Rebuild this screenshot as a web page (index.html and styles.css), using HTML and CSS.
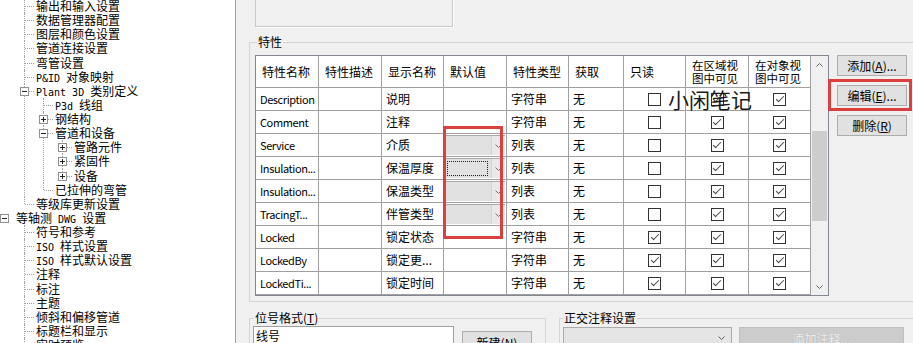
FILE: index.html
```html
<!DOCTYPE html>
<html lang="zh-CN">
<head>
    <meta charset="UTF-8">
    <title>项目设置 - 特性</title>
    <link rel="stylesheet" href="styles.css">
</head>
<body>
    <!-- 左侧设置树 -->
    <div class="tree">
        <ul class="root">
            <li>
                <ul>
                    <li><div class="row">输出和输入设置</div></li>
                    <li><div class="row">数据管理器配置</div></li>
                    <li><div class="row">图层和颜色设置</div></li>
                    <li><div class="row">管道连接设置</div></li>
                    <li><div class="row">弯管设置</div></li>
                    <li><div class="row"><span class="a">P&amp;ID </span>对象映射</div></li>
                    <li>
                        <div class="row"><span class="exp"></span><span class="a">Plant 3D </span>类别定义</div>
                        <ul>
                            <li><div class="row"><span class="a">P3d </span>线组</div></li>
                            <li><div class="row"><span class="exp plus"></span>钢结构</div></li>
                            <li>
                                <div class="row"><span class="exp"></span>管道和设备</div>
                                <ul>
                                    <li><div class="row"><span class="exp plus"></span>管路元件</div></li>
                                    <li><div class="row"><span class="exp plus"></span>紧固件</div></li>
                                    <li><div class="row"><span class="exp plus"></span>设备</div></li>
                                </ul>
                            </li>
                            <li><div class="row">已拉伸的弯管</div></li>
                        </ul>
                    </li>
                    <li><div class="row">等级库更新设置</div></li>
                </ul>
            </li>
            <li>
                <div class="row"><span class="exp"></span>等轴测<span class="a"> DWG </span>设置</div>
                <ul>
                    <li><div class="row">符号和参考</div></li>
                    <li><div class="row"><span class="a">ISO </span>样式设置</div></li>
                    <li><div class="row"><span class="a">ISO </span>样式默认设置</div></li>
                    <li><div class="row">注释</div></li>
                    <li><div class="row">标注</div></li>
                    <li><div class="row">主题</div></li>
                    <li><div class="row">倾斜和偏移管道</div></li>
                    <li><div class="row">标题栏和显示</div></li>
                    <li class="more"><div class="row">实时预览</div></li>
                </ul>
            </li>
        </ul>
    </div>

    <!-- 右侧内容 -->
    <div class="main">
        <div class="topbox"></div>

        <fieldset class="group props">
            <legend>特性</legend>
            <div class="props-body">
                <div class="grid-wrap">
                    <div class="grid">
                        <div class="h">特性名称</div><div class="h">特性描述</div><div class="h">显示名称</div><div class="h">默认值</div><div class="h">特性类型</div><div class="h">获取</div><div class="h">只读</div><div class="h two">在区域视<br>图中可见</div><div class="h two">在对象视<br>图中可见</div>

                        <div class="c en">Description</div><div class="c"></div><div class="c">说明</div><div class="c"></div><div class="c">字符串</div><div class="c">无</div><div class="c ck"><span class="box"></span></div><div class="c ck"><span class="box on"></span></div><div class="c ck"><span class="box on"></span></div>

                        <div class="c en">Comment</div><div class="c"></div><div class="c">注释</div><div class="c"></div><div class="c">字符串</div><div class="c">无</div><div class="c ck"><span class="box"></span></div><div class="c ck"><span class="box on"></span></div><div class="c ck"><span class="box on"></span></div>

                        <div class="c en">Service</div><div class="c"></div><div class="c">介质</div>
                        <div class="c cb"><div class="combo"><span class="combo-text"></span><span class="combo-btn"><svg width="7" height="4" viewBox="0 0 7 4"><polyline points="0.5,0.5 3.5,3.5 6.5,0.5" fill="none" stroke="#707070"/></svg></span></div></div>
                        <div class="c">列表</div><div class="c">无</div><div class="c ck"><span class="box"></span></div><div class="c ck"><span class="box on"></span></div><div class="c ck"><span class="box on"></span></div>

                        <div class="c en">Insulation...</div><div class="c"></div><div class="c">保温厚度</div>
                        <div class="c cb"><div class="combo"><span class="combo-text"><span class="focus"></span></span><span class="combo-btn"><svg width="7" height="4" viewBox="0 0 7 4"><polyline points="0.5,0.5 3.5,3.5 6.5,0.5" fill="none" stroke="#707070"/></svg></span></div></div>
                        <div class="c">列表</div><div class="c">无</div><div class="c ck"><span class="box"></span></div><div class="c ck"><span class="box on"></span></div><div class="c ck"><span class="box on"></span></div>

                        <div class="c en">Insulation...</div><div class="c"></div><div class="c">保温类型</div>
                        <div class="c cb"><div class="combo"><span class="combo-text"></span><span class="combo-btn"><svg width="7" height="4" viewBox="0 0 7 4"><polyline points="0.5,0.5 3.5,3.5 6.5,0.5" fill="none" stroke="#707070"/></svg></span></div></div>
                        <div class="c">列表</div><div class="c">无</div><div class="c ck"><span class="box"></span></div><div class="c ck"><span class="box on"></span></div><div class="c ck"><span class="box on"></span></div>

                        <div class="c en">TracingT...</div><div class="c"></div><div class="c">伴管类型</div>
                        <div class="c cb"><div class="combo"><span class="combo-text"></span><span class="combo-btn"><svg width="7" height="4" viewBox="0 0 7 4"><polyline points="0.5,0.5 3.5,3.5 6.5,0.5" fill="none" stroke="#707070"/></svg></span></div></div>
                        <div class="c">列表</div><div class="c">无</div><div class="c ck"><span class="box"></span></div><div class="c ck"><span class="box on"></span></div><div class="c ck"><span class="box on"></span></div>

                        <div class="c en">Locked</div><div class="c"></div><div class="c">锁定状态</div><div class="c"></div><div class="c">字符串</div><div class="c">无</div><div class="c ck"><span class="box on"></span></div><div class="c ck"><span class="box on"></span></div><div class="c ck"><span class="box on"></span></div>

                        <div class="c en">LockedBy</div><div class="c"></div><div class="c">锁定更...</div><div class="c"></div><div class="c">字符串</div><div class="c">无</div><div class="c ck"><span class="box on"></span></div><div class="c ck"><span class="box on"></span></div><div class="c ck"><span class="box on"></span></div>

                        <div class="c en">LockedTi...</div><div class="c"></div><div class="c">锁定时间</div><div class="c"></div><div class="c">字符串</div><div class="c">无</div><div class="c ck"><span class="box on"></span></div><div class="c ck"><span class="box on"></span></div><div class="c ck"><span class="box on"></span></div>
                    </div>

                    <!-- 垂直滚动条 -->
                    <div class="vscroll">
                        <div class="sb-arrow"><svg width="7" height="4" viewBox="0 0 7 4"><polyline points="0.5,3.5 3.5,0.5 6.5,3.5" fill="none" stroke="#606060"/></svg></div>
                        <div class="sb-thumb"></div>
                        <div class="sb-arrow down"><svg width="7" height="4" viewBox="0 0 7 4"><polyline points="0.5,0.5 3.5,3.5 6.5,0.5" fill="none" stroke="#606060"/></svg></div>
                    </div>
                </div>

                <div class="btns">
                    <button class="btn">添加(<u>A</u>)...</button>
                    <button class="btn">编辑(<u>E</u>)...</button>
                    <button class="btn">删除(<u>R</u>)</button>
                </div>
            </div>
        </fieldset>

        <div class="bottom">
            <fieldset class="group tag">
                <legend>位号格式(<u>T</u>)</legend>
                <div class="tag-row">
                    <div class="textbox">线号</div>
                    <button class="btn btn-new">新建(<u>N</u>)</button>
                </div>
            </fieldset>
            <fieldset class="group ortho">
                <legend>正交注释设置</legend>
                <div class="tag-row">
                    <div class="dd"><svg width="7" height="4" viewBox="0 0 7 4"><polyline points="0.5,0.5 3.5,3.5 6.5,0.5" fill="none" stroke="#606060"/></svg></div>
                    <button class="btn btn-off" disabled>添加注释...</button>
                </div>
            </fieldset>
        </div>
    </div>

    <!-- 标注框和水印 -->
    <div class="mark mark-default"></div>
    <div class="mark mark-edit"></div>
    <div class="wm">小闲笔记</div>
</body>
</html>
```

FILE: styles.css
```css
/* General */
* {
    box-sizing: border-box;
}

body {
    margin: 0;
    height: 343px;
    overflow: hidden;
    position: relative;
    display: flex;
    background: #f0f0f0;
    color: #000;
    font-family: "Noto Sans CJK SC", "Noto Sans", sans-serif;
    font-size: 12px;
}

/* Settings tree */
.tree {
    width: 236px;
    flex: none;
    background: #fff;
    border-right: 1px solid #a0a0a0;
    overflow: hidden;
}

.tree ul {
    list-style: none;
    margin: 0;
    padding: 0;
}

.tree .root {
    margin-top: -1px;
}

.tree .root > li > ul {
    padding-left: 20px;
}

.tree ul ul ul {
    padding-left: 19px;
}

.tree li {
    position: relative;
}

.tree .row {
    height: 14.13px;
    line-height: 14px;
    padding-left: 16px;
    white-space: nowrap;
}

/* dotted tree lines */
.tree ul ul > li::before {
    content: "";
    position: absolute;
    left: 4px;
    top: 0;
    bottom: 0;
    border-left: 1px dotted #a0a0a0;
}

.tree ul ul > li:last-child::before {
    bottom: auto;
    height: 7px;
}

.tree ul ul > li.more::before {
    bottom: 0;
    height: auto;
}

.tree ul ul > li > .row::before {
    content: "";
    position: absolute;
    left: 5px;
    top: 7px;
    width: 9px;
    border-top: 1px dotted #a0a0a0;
}

.exp {
    position: absolute;
    left: 0;
    top: 3px;
    width: 9px;
    height: 9px;
    border: 1px solid #919191;
    background: #fff;
    z-index: 1;
}

.exp::before {
    content: "";
    position: absolute;
    left: 1px;
    top: 3px;
    width: 5px;
    border-top: 1px solid #222;
}

.exp.plus::after {
    content: "";
    position: absolute;
    left: 3px;
    top: 1px;
    height: 5px;
    border-left: 1px solid #222;
}

.a {
    font-family: "DejaVu Sans Mono", monospace;
    font-size: 10px;
}

/* Right panel */
.main {
    flex: 1;
    padding-left: 13px;
    min-width: 0;
}

.topbox {
    margin: -1px 0 0 6px;
    width: 198px;
    height: 28px;
    border: 1px solid #c8c8c8;
    box-shadow: 1px 1px 0 #fff;
}

.group {
    margin: 0;
    border: 1px solid #d5d5d5;
    min-width: 0;
}

.group legend {
    padding: 0 1px;
    font-size: 12px;
    line-height: 14px;
}

.props {
    margin: 8px -10px 0 0;
    padding: 6px 0 5px 5px;
}

.props legend {
    margin-left: 2px;
}

.props-body {
    display: flex;
    align-items: flex-start;
}

/* Property grid */
.grid-wrap {
    display: flex;
    border: 1px solid #828790;
}

.grid {
    display: grid;
    grid-template-columns: 63px 63px 62px 63px 62px 55px 62px 63px 62px;
    grid-template-rows: 32px;
    grid-auto-rows: 23px;
    background: #fff;
}

.grid > div {
    border-right: 1px solid #a0a0a0;
    border-bottom: 1px solid #a0a0a0;
    overflow: hidden;
    white-space: nowrap;
}

.h {
    display: flex;
    align-items: center;
    padding-left: 6px;
    line-height: 13px;
}

.h.two {
    font-size: 11.5px;
}

.c {
    padding-left: 4px;
    line-height: 22px;
}

.c.en {
    font-size: 11px;
    letter-spacing: -0.4px;
}

.ck {
    display: flex;
    align-items: center;
    justify-content: center;
    padding-left: 0;
}

.box {
    position: relative;
    width: 13px;
    height: 13px;
    border: 1px solid #333;
    background: #fff;
}

.box.on::after {
    content: "";
    position: absolute;
    left: 3.5px;
    top: 0.5px;
    width: 3px;
    height: 7px;
    border-right: 1px solid #444;
    border-bottom: 1px solid #444;
    transform: rotate(45deg);
}

.c.cb {
    padding: 1px 1px 1px 1px;
}

.combo {
    display: flex;
    height: 100%;
    background: #e1e1e1;
    border-top: 1px solid #a8a8a8;
}

.combo-text {
    flex: 1;
    padding: 2px 3px 2px 2px;
}

.focus {
    display: block;
    height: 100%;
    border: 1px dotted #222;
}

.combo-btn {
    width: 14px;
    display: flex;
    align-items: center;
    justify-content: center;
    background: #e9e9e9;
    border-left: 1px solid #d4d4d4;
}

/* Scrollbar */
.vscroll {
    width: 17px;
    display: flex;
    flex-direction: column;
    background: #f0f0f0;
}

.sb-arrow {
    height: 17px;
    display: flex;
    align-items: center;
    justify-content: center;
}

.sb-arrow.down {
    margin-top: auto;
}

.sb-thumb {
    height: 90px;
    margin: 58px 1px 0;
    background: #cdcdcd;
}

/* Buttons */
.btns {
    display: flex;
    flex-direction: column;
    gap: 9px;
    margin-left: 8px;
}

.btn {
    width: 70px;
    height: 21px;
    padding: 0;
    background: #e1e1e1;
    border: 1px solid #adadad;
    font-family: inherit;
    font-size: 12px;
    line-height: 19px;
    color: #000;
}

/* Bottom groups */
.bottom {
    display: flex;
    margin: 9px -10px 0 0;
}

.tag {
    width: 297px;
    flex: none;
    padding: 1px 0 0 3px;
}

.tag legend {
    margin-left: 1px;
}

.tag-row {
    display: flex;
    align-items: flex-start;
}

.textbox {
    width: 201px;
    height: 22px;
    padding: 0 2px;
    line-height: 18px;
    background: #fff;
    border: 1px solid #a0a0a0;
}

.btn-new {
    margin: 5px 0 0 8px;
    height: 22px;
}

.ortho {
    flex: 1;
    margin-left: 13px;
    padding: 2px 0 0 3px;
}

.ortho legend {
    margin-left: 0;
}

.dd {
    width: 169px;
    height: 22px;
    display: flex;
    align-items: center;
    justify-content: flex-end;
    padding-right: 6px;
    background: #e5e5e5;
    border: 1px solid #acacac;
}

.btn-off {
    width: 165px;
    height: 22px;
    margin-left: 7px;
    background: #cccccc;
    border-color: #bfbfbf;
    color: #eeeeee;
    text-shadow: 0 0 1px #a8a8a8;
}

/* Red marks and watermark */
.mark {
    position: absolute;
    border: 3px solid #d9403f;
}

.mark-default {
    left: 443px;
    top: 126px;
    width: 60px;
    height: 113px;
}

.mark-edit {
    left: 828px;
    top: 79px;
    width: 84px;
    height: 32px;
}

.wm {
    position: absolute;
    left: 668px;
    top: 88px;
    font-size: 21px;
    line-height: 22px;
    color: #1a1a1a;
}
```
